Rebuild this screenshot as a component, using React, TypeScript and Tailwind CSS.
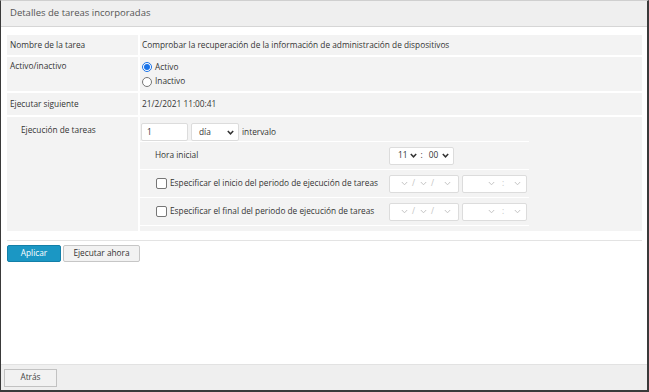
import React from "react";

function Chevron({ light }: { light?: boolean }) {
    return (
        <svg width="7" height="5" viewBox="0 0 7 5" className="shrink-0">
            <polyline
                points="0.8,1 3.5,3.8 6.2,1"
                fill="none"
                stroke={light ? "#c4c4c4" : "#333"}
                strokeWidth={light ? 1 : 1.5}
            />
        </svg>
    );
}

function DateSelect() {
    return (
        <div className="flex h-[18px] w-[70px] items-center rounded-[2px] border border-[#dcdcdc] bg-white pl-[11px] pr-[7px] text-[#c4c4c4]">
            <Chevron light />
            <span className="ml-[4px]">/</span>
            <span className="ml-[5px]"><Chevron light /></span>
            <span className="ml-[4px]">/</span>
            <span className="ml-auto"><Chevron light /></span>
        </div>
    );
}

function TimeSelect() {
    return (
        <div className="ml-[3px] flex h-[18px] w-[65px] items-center rounded-[2px] border border-[#dcdcdc] bg-white pl-[25px] pr-[5px] text-[#c4c4c4]">
            <Chevron light />
            <span className="ml-[7px]">:</span>
            <span className="ml-auto"><Chevron light /></span>
        </div>
    );
}

function Checkbox() {
    return (
        <span className="h-[11px] w-[11px] shrink-0 rounded-[2px] border border-[#767676] bg-white" />
    );
}

function Radio({ checked }: { checked?: boolean }) {
    return checked ? (
        <span className="flex h-[10px] w-[10px] items-center justify-center rounded-full border border-[#1a73e8] bg-white">
            <span className="h-[6px] w-[6px] rounded-full bg-[#1a73e8]" />
        </span>
    ) : (
        <span className="h-[10px] w-[10px] rounded-full border border-[#767676] bg-white" />
    );
}

export default function App() {
    const font = { fontFamily: '"Open Sans", "Noto Sans", sans-serif' };

    return (
        <div
            style={font}
            className="flex h-[392px] w-[649px] flex-col border-t border-l border-r-2 border-b-2 border-t-[#cfcfcf] border-l-[#3a3a3a] border-r-[#3a3a3a] border-b-[#3a3a3a] text-[8.3px] text-[#333]"
        >
            {/* Header */}
            <div className="flex h-[26px] shrink-0 items-center border-b border-[#d6d6d6] bg-[#efefef] px-[9px] text-[9.5px] text-[#555]">
                Detalles de tareas incorporadas
            </div>

            {/* Main content */}
            <div className="flex flex-1 flex-col bg-white pt-[8px] pl-[6px] pr-[5px]">
                <div className="grid grid-cols-[131px_1fr] gap-[2px]">
                    <div className="flex h-[20px] items-center bg-[#f3f3f3] pl-[3px]">Nombre de la tarea</div>
                    <div className="flex h-[20px] items-center bg-[#f3f3f3] pl-[2px]">
                        Comprobar la recuperación de la información de administración de dispositivos
                    </div>

                    <div className="h-[34px] bg-[#f3f3f3] pl-[3px] pt-[3px]">Activo/inactivo</div>
                    <div className="flex h-[34px] flex-col gap-[2px] bg-[#f3f3f3] pl-[2px] pt-[4px]">
                        <div className="flex items-center gap-[3px]">
                            <Radio checked />
                            <span>Activo</span>
                        </div>
                        <div className="flex items-center gap-[3px]">
                            <Radio />
                            <span>Inactivo</span>
                        </div>
                    </div>

                    <div className="flex h-[22px] items-center bg-[#f3f3f3] pl-[3px]">Ejecutar siguiente</div>
                    <div className="flex h-[22px] items-center bg-[#f3f3f3] pl-[2px]">21/2/2021 11:00:41</div>

                    <div className="h-[114px] bg-[#f3f3f3] pl-[14px] pt-[7px]">Ejecución de tareas</div>
                    <div className="h-[114px] bg-[#f3f3f3] pt-[6px]">
                        <div className="flex items-center pl-[1px]">
                            <div className="flex h-[18px] w-[47px] items-center rounded-[2px] border border-[#dcdcdc] bg-white pl-[5px]">
                                1
                            </div>
                            <div className="ml-[3px] flex h-[18px] w-[48px] items-center rounded-[2px] border border-[#dcdcdc] bg-white pl-[7px] pr-[4px]">
                                <span>día</span>
                                <span className="ml-auto"><Chevron /></span>
                            </div>
                            <span className="ml-[3px]">intervalo</span>
                        </div>

                        <div className="grid w-[389px] grid-cols-[249px_1fr] border-t border-white">
                            <div className="flex h-[28px] items-center border-b border-white pl-[15px]">Hora inicial</div>
                            <div className="flex h-[28px] items-center border-b border-white">
                                <div className="flex h-[18px] w-[65px] items-center rounded-[2px] border border-[#dcdcdc] bg-white pl-[8px] pr-[4px]">
                                    <span>11</span>
                                    <span className="ml-[2px]"><Chevron /></span>
                                    <span className="ml-[4px]">:</span>
                                    <span className="ml-[6px]">00</span>
                                    <span className="ml-auto"><Chevron /></span>
                                </div>
                            </div>

                            <div className="flex h-[28px] items-center gap-[3px] border-b border-white pl-[16px]">
                                <Checkbox />
                                <span>Especificar el inicio del periodo de ejecución de tareas</span>
                            </div>
                            <div className="flex h-[28px] items-center border-b border-white">
                                <DateSelect />
                                <TimeSelect />
                            </div>

                            <div className="flex h-[28px] items-center gap-[3px] border-b border-white pl-[16px]">
                                <Checkbox />
                                <span>Especificar el final del periodo de ejecución de tareas</span>
                            </div>
                            <div className="flex h-[28px] items-center border-b border-white">
                                <DateSelect />
                                <TimeSelect />
                            </div>
                        </div>
                    </div>
                </div>

                <div className="mt-[9px] border-t border-[#e3e3e3]" />

                <div className="mt-[4px] flex gap-[2px]">
                    <button className="h-[17px] w-[54px] rounded-[2px] border border-[#137fa8] bg-[#1b97c4] text-white">
                        Aplicar
                    </button>
                    <button className="h-[17px] w-[77px] rounded-[2px] border border-[#c6c6c6] bg-[#f2f2f2] text-[#333]">
                        Ejecutar ahora
                    </button>
                </div>
            </div>

            {/* Footer */}
            <div className="flex h-[26px] shrink-0 items-center border-t border-[#e2e2e2] bg-[#efefef] pl-[3px]">
                <button className="h-[18px] w-[53px] border border-[#c2c2c2] bg-[#f2f2f2] text-[#444]">
                    Atrás
                </button>
            </div>
        </div>
    );
}
